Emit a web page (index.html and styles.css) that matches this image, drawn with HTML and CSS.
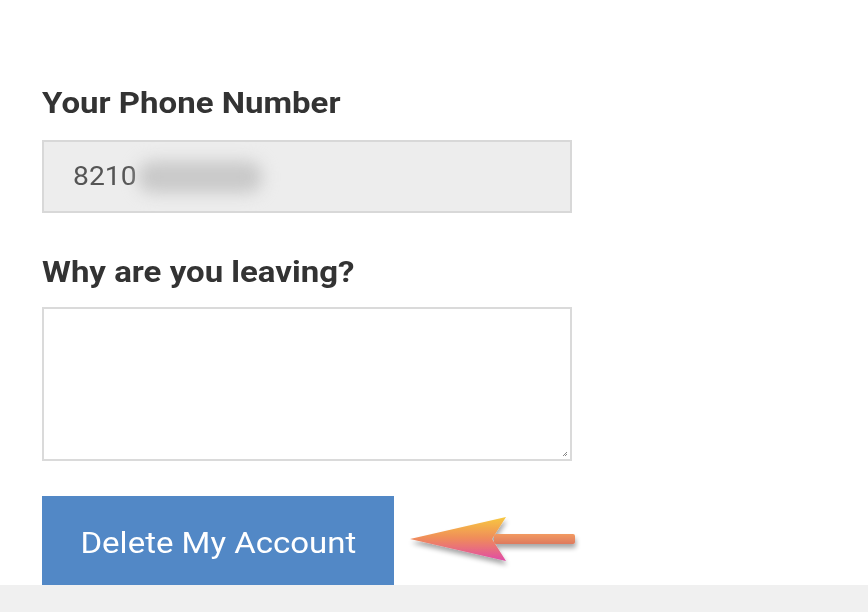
FILE: index.html
```html
<!DOCTYPE html>
<html>
<head>
<meta charset="utf-8">
<link rel="stylesheet" href="styles.css">
</head>
<body>
<main class="page">
  <form class="form">
    <div class="field">
      <label class="label"><span class="wide">Your Phone Number</span></label>
      <div class="input readonly"><span class="num">8210</span><span class="blur"></span></div>
    </div>
    <div class="field">
      <label class="label label-2"><span class="wide">Why are you leaving?</span></label>
      <div class="textarea"><svg class="grip" width="6" height="6" viewBox="0 0 6 6"><path d="M5 1L1 5M5 3L3 5" stroke="#888" stroke-width="1"/></svg></div>
    </div>
    <div class="actions">
      <button type="button" class="btn"><span class="btn-text">Delete My Account</span></button>
      <svg class="arrow" width="180" height="60" viewBox="0 0 180 60">
        <defs>
          <linearGradient id="hg" x1="0" y1="0" x2="0" y2="1">
            <stop offset="0" stop-color="#f7c83e"/>
            <stop offset="0.5" stop-color="#ef8a5c"/>
            <stop offset="1" stop-color="#e04aa8"/>
          </linearGradient>
          <linearGradient id="sg" x1="0" y1="0" x2="0" y2="1">
            <stop offset="0" stop-color="#f29a62"/>
            <stop offset="1" stop-color="#de7a5e"/>
          </linearGradient>
          <filter id="sh" x="-20%" y="-30%" width="140%" height="170%">
            <feGaussianBlur in="SourceAlpha" stdDeviation="2.5"/>
            <feOffset dx="1" dy="4"/>
            <feComponentTransfer><feFuncA type="linear" slope="0.35"/></feComponentTransfer>
            <feMerge><feMergeNode/><feMergeNode in="SourceGraphic"/></feMerge>
          </filter>
        </defs>
        <g filter="url(#sh)">
          <rect x="86" y="17" width="81" height="10" rx="2" fill="url(#sg)"/>
          <path d="M2 22 L98 0 L84 22 L98 44 Z" fill="url(#hg)"/>
        </g>
      </svg>
    </div>
  </form>
  <footer class="band"></footer>
</main>
</body>
</html>
```
FILE: styles.css
```css
html, body {
  margin: 0;
  padding: 0;
  background: #fff;
}
.page {
  width: 868px;
  height: 612px;
  display: flex;
  flex-direction: column;
  font-family: Roboto, "Liberation Sans", sans-serif;
}
.form {
  flex: 1;
  padding: 85px 0 0 42px;
  display: flex;
  flex-direction: column;
}
.field {
  display: flex;
  flex-direction: column;
  align-items: flex-start;
}
.label {
  font-size: 30px;
  font-weight: 700;
  color: #333;
  line-height: 36px;
  margin-bottom: 19px;
}
.wide {
  display: inline-block;
  transform: scaleX(1.1);
  transform-origin: left center;
}
.label-2 {
  margin-bottom: 17px;
}
.input {
  box-sizing: border-box;
  width: 530px;
  height: 73px;
  border: 2px solid #d8d8d8;
  display: flex;
  align-items: center;
  padding-left: 29px;
  margin-bottom: 41px;
}
.readonly {
  background: #ededed;
}
.num {
  display: inline-block;
  font-size: 25px;
  color: #555;
  transform: scaleX(1.13);
  transform-origin: left center;
  width: 63px;
}
.blur {
  width: 124px;
  height: 32px;
  background: #c9c9c9;
  filter: blur(8px);
  border-radius: 14px;
  margin-left: 2px;
}
.textarea {
  box-sizing: border-box;
  width: 530px;
  height: 154px;
  border: 2px solid #dadada;
  background: #fff;
  margin-bottom: 35px;
  display: flex;
  justify-content: flex-end;
  align-items: flex-end;
  padding: 2px;
}
.actions {
  display: flex;
  align-items: center;
  gap: 14px;
}
.btn {
  width: 352px;
  height: 89px;
  border: none;
  background: #5288c6;
  color: #fff;
  font-family: Roboto, "Liberation Sans", sans-serif;
  font-size: 30px;
  padding: 4px 0 0;
}
.btn-text {
  display: inline-block;
  transform: scaleX(1.1);
}
.arrow {
  margin-top: 13px;
}
.band {
  height: 27px;
  background: #f0f0f0;
}
```
